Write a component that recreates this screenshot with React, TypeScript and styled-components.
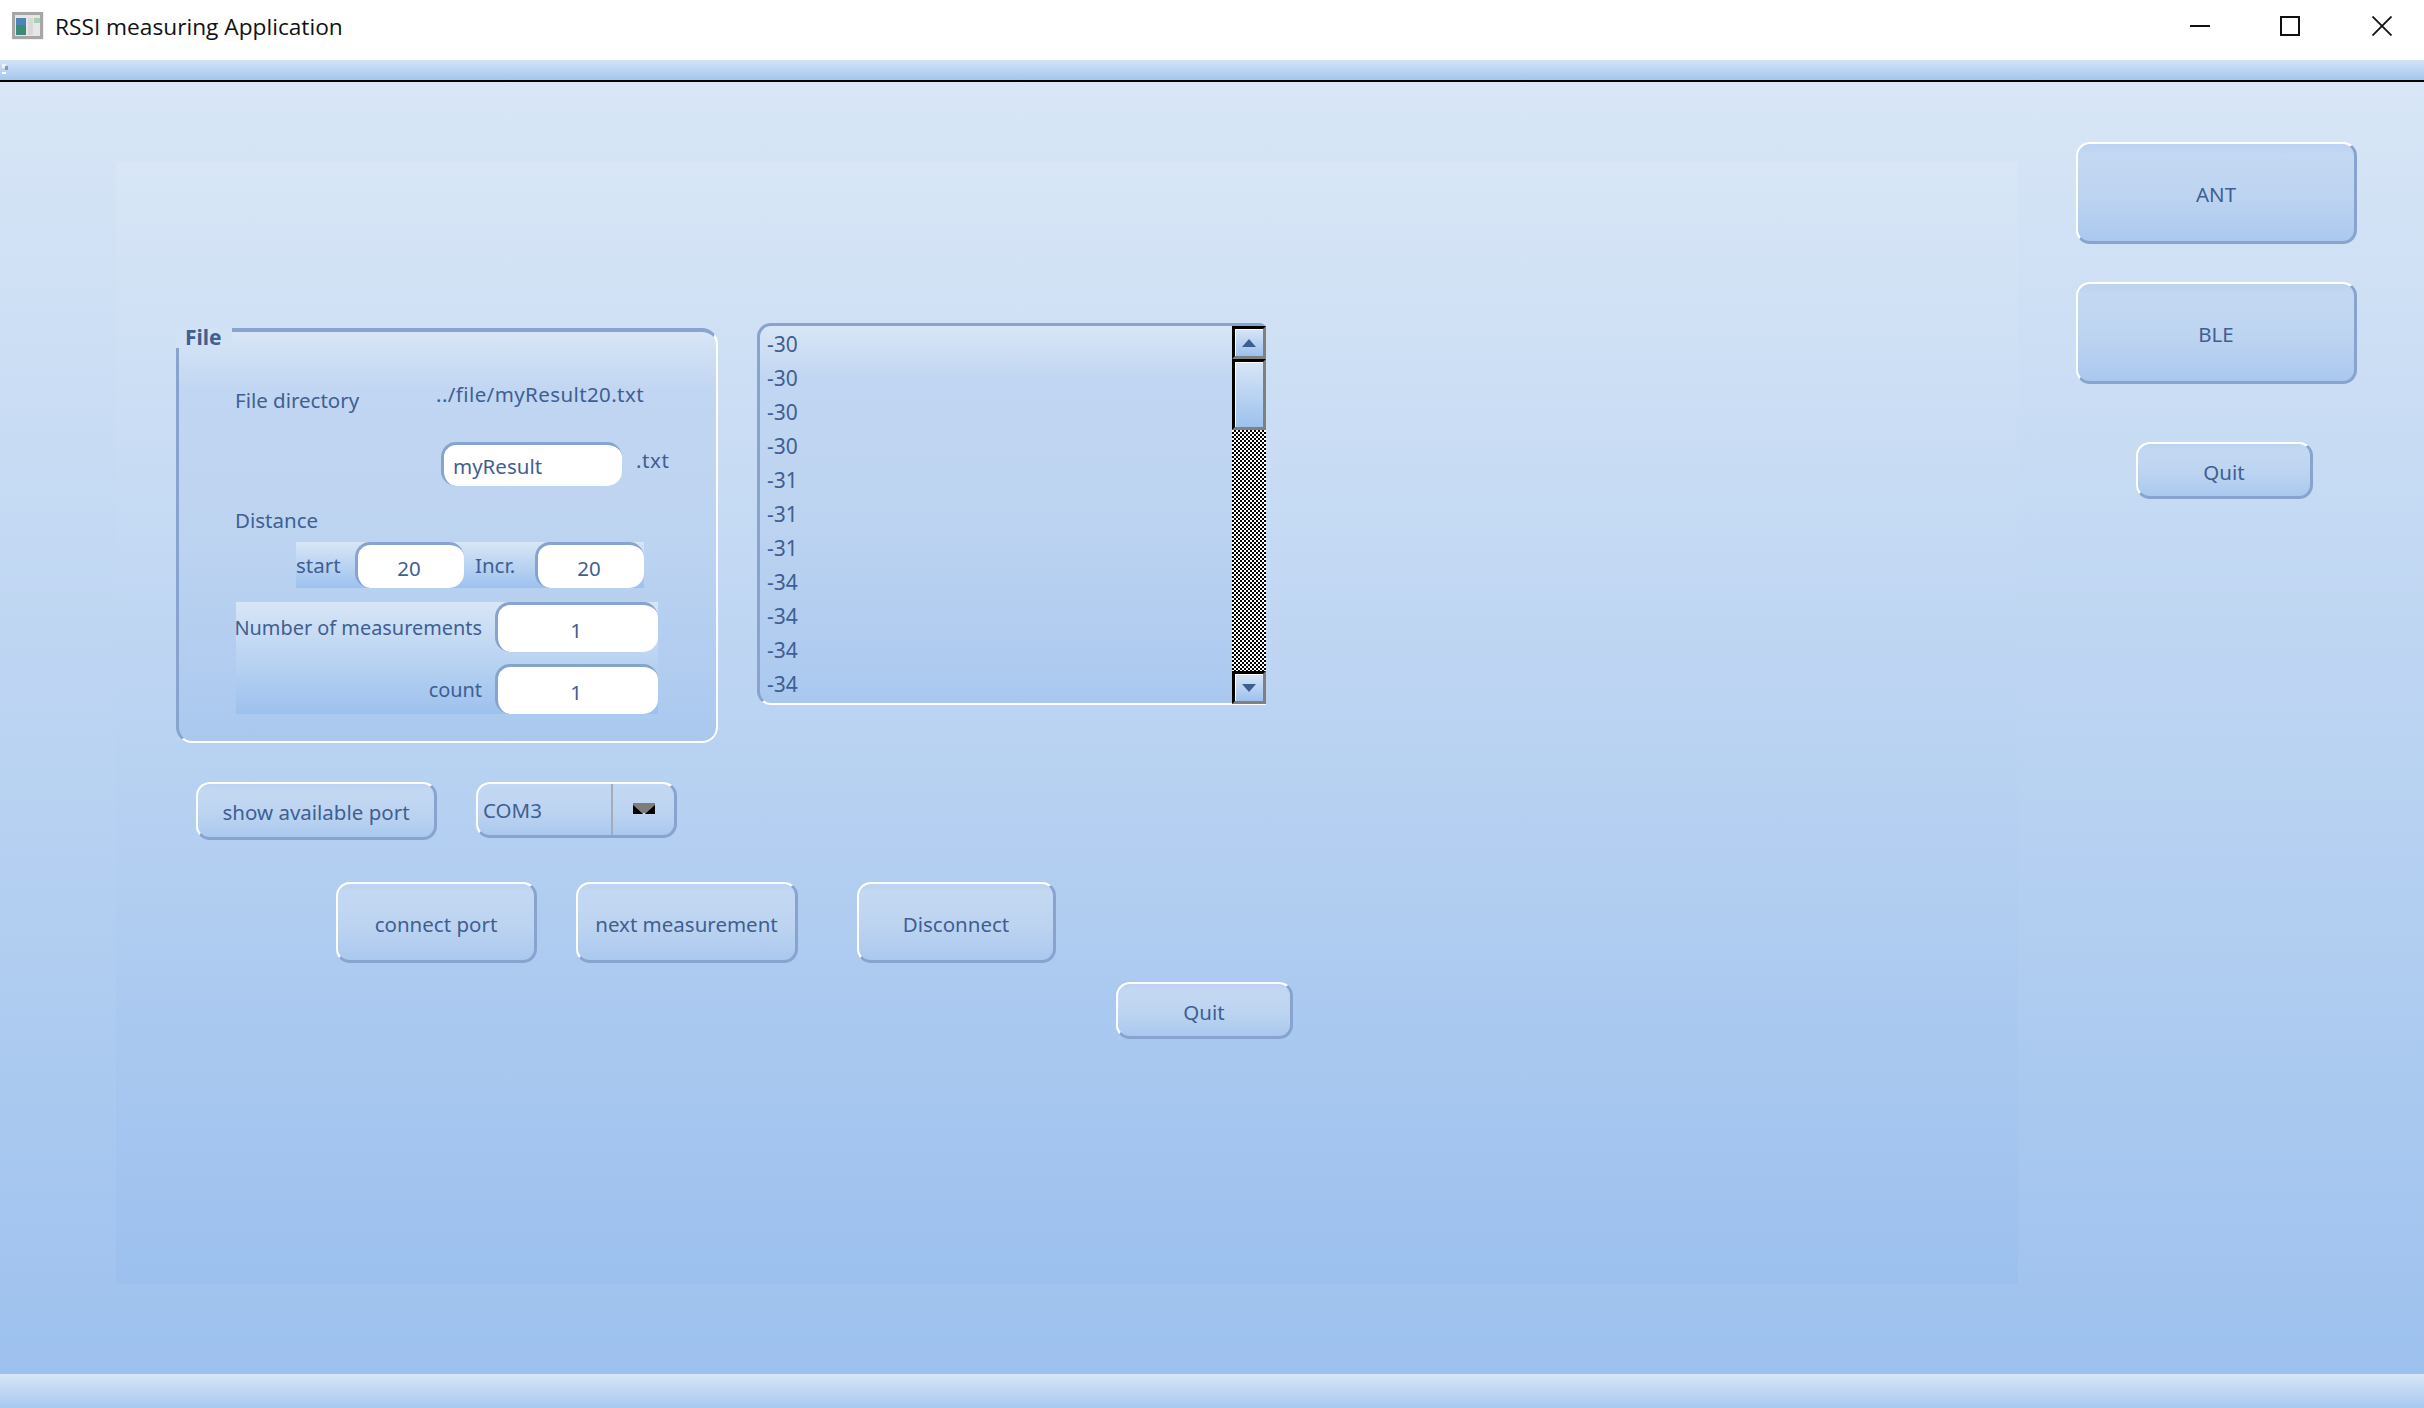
import React from "react";
import styled, { createGlobalStyle } from "styled-components";

const Global = createGlobalStyle`
  html, body { margin: 0; padding: 0; width: 2424px; height: 1408px; overflow: hidden; background: #fff; }
  #root { width: 2424px; height: 1408px; }
  * { box-sizing: border-box; }
`;

const face = `"Noto Sans", "Open Sans", sans-serif`;
const ink = "#3f5f92";
const dark = "#87a3ce";

const Window = styled.div`
  display: flex;
  flex-direction: column;
  width: 2424px;
  height: 1408px;
  font-family: ${face};
  font-size: 20.5px;
  color: ${ink};
`;
const TitleBar = styled.div`
  display: flex;
  align-items: center;
  height: 60px;
  padding: 0 0 8px 12px;
  background: #fff;
`;
const TitleText = styled.span`
  margin-left: 11px;
  font-family: "Open Sans", sans-serif;
  font-size: 22.7px;
  color: #111;
  flex: 1;
`;
const WinControls = styled.div`
  display: flex;
  align-items: center;
  gap: 70px;
  padding-right: 32px;
`;
const CloseSlot = styled.div`
  display: flex;
  margin-left: 2px;
`;
const MenuBar = styled.div`
  display: flex;
  align-items: center;
  height: 22px;
  padding: 0 0 2px 2px;
  background: linear-gradient(#d3e3f6, #a5c6ef);
  border-bottom: 2px solid #000;
`;
const Central = styled.div`
  flex: 1;
  display: flex;
  align-items: flex-start;
  padding: 60px 0 0 116px;
  background: linear-gradient(#d8e6f6, #9dc1ee);
`;
const Panel = styled.div`
  flex: none;
  width: 1902px;
  height: 1122px;
  margin-top: 20px;
  padding-top: 161px;
  display: flex;
  flex-direction: column;
  background: linear-gradient(#d8e6f6, #9cc0ee);
`;
const TopRow = styled.div`
  display: flex;
  align-items: flex-start;
  gap: 39px;
  padding-left: 60px;
`;
const Group = styled.div`
  position: relative;
  width: 542px;
  height: 415px;
  margin-top: 5px;
  padding-top: 50px;
  border-style: solid;
  border-width: 4px 2px 2px 3px;
  border-color: ${dark} #fff #fff ${dark};
  border-radius: 16px;
  background: linear-gradient(#d8e6f6 0, #c1d6f2 14%, #bdd4f1 50%, #aac8ef 100%);
`;
const GroupTitle = styled.div`
  position: absolute;
  left: -3px;
  top: -4px;
  width: 56px;
  height: 20px;
  padding-left: 9px;
  line-height: 18px;
  font-weight: 700;
  font-size: 21px;
  background: #d2e2f5;
`;
const Label = styled.div`
  height: 24px;
  line-height: 24px;
  white-space: nowrap;
`;
const DirRow = styled.div`
  display: flex;
  padding-left: 56px;
`;
const DirLabel = styled(Label)`
  width: 201px;
  margin-top: 6px;
`;
const DirValue = styled(Label)`
  letter-spacing: 0.4px;
`;
const NameRow = styled.div`
  display: flex;
  margin: 30px 0 0 262px;
`;
const Suffix = styled(Label)`
  margin: 6px 0 0 14px;
  letter-spacing: 0.6px;
`;
const DistanceLabel = styled(Label)`
  margin: 22px 0 0 56px;
`;
const Field = styled.div<{ $w: number; $h: number; $left?: boolean }>`
  width: ${(p) => p.$w}px;
  height: ${(p) => p.$h}px;
  flex: none;
  padding: ${(p) => (p.$left ? "1px 0 0 9px" : "2px 4px 0 0")};
  display: flex;
  align-items: center;
  justify-content: ${(p) => (p.$left ? "flex-start" : "center")};
  background: #fff;
  border-style: solid;
  border-width: 3px 0 0 3px;
  border-color: ${dark};
  border-radius: 15px;
  white-space: nowrap;
`;
const StartStrip = styled.div`
  display: flex;
  align-items: center;
  width: 348px;
  height: 46px;
  margin: 10px 0 0 117px;
  background: linear-gradient(#d8e6f6, #9dc1ee);
`;
const StartLabel = styled.span`
  width: 59px;
`;
const IncrLabel = styled.span`
  width: 71px;
  padding-left: 11px;
`;
const CountStrip = styled.div`
  display: grid;
  grid-template-columns: 246px 163px;
  grid-auto-rows: 50px;
  column-gap: 13px;
  row-gap: 12px;
  align-items: center;
  width: 422px;
  margin: 14px 0 0 57px;
  background: linear-gradient(#d8e6f6, #9dc1ee);
`;
const RightLabel = styled.span`
  justify-self: end;
  font-size: 19.9px;
  white-space: nowrap;
`;
const ListBox = styled.div`
  display: flex;
  width: 509px;
  height: 382px;
  border-style: solid;
  border-width: 3px 0 2px 3px;
  border-color: ${dark} transparent #fff ${dark};
  border-radius: 14px 6px 0 14px;
  background: linear-gradient(#d8e6f6 0, #c1d6f2 14%, #bdd4f1 50%, #aac8ef 100%);
`;
const Items = styled.div`
  flex: 1;
  padding: 1px 0 0 7px;
  font-size: 21px;
`;
const Item = styled.div`
  height: 34px;
  line-height: 34px;
`;
const Scrollbar = styled.div`
  width: 34px;
  height: 378px;
  display: flex;
  flex-direction: column;
  flex: none;
`;
const ScrollPart = styled.div<{ $h: number }>`
  height: ${(p) => p.$h}px;
  flex: none;
  display: flex;
  align-items: center;
  justify-content: center;
  border-style: solid;
  border-width: 3px;
  border-color: #000 #808080 #808080 #000;
  box-shadow: inset 1px 1px 0 #fff;
  background: linear-gradient(#d8e6f6, #9dc1ee);
`;
const Trough = styled.div`
  flex: 1;
  background: repeating-conic-gradient(#000 0 25%, #fff 0 50%) 0 0 / 4px 4px;
`;
const PortRow = styled.div`
  display: flex;
  gap: 39px;
  margin: 39px 0 0 80px;
`;
const Button = styled.div<{ $w: number; $h: number }>`
  width: ${(p) => p.$w}px;
  height: ${(p) => p.$h}px;
  padding-top: 3px;
  display: flex;
  align-items: center;
  justify-content: center;
  flex: none;
  border-style: solid;
  border-width: 2px 3px 3px 2px;
  border-color: #fff ${dark} ${dark} #fff;
  border-radius: 14px;
  background: linear-gradient(#bcd2f0 0, #c3d8f2 12%, #bdd4f1 55%, #aac8ef 100%);
  white-space: nowrap;
`;
const Combo = styled.div`
  display: flex;
  width: 201px;
  height: 56px;
  border-style: solid;
  border-width: 2px 3px 3px 2px;
  border-color: #fff ${dark} ${dark} #fff;
  border-radius: 14px;
  background: linear-gradient(#c3d8f2 0, #bdd4f1 55%, #aac8ef 100%);
`;
const ComboText = styled.div`
  width: 135px;
  padding-left: 5px;
  display: flex;
  align-items: center;
  border-right: 2px solid #a3acb8;
`;
const ComboArrow = styled.div`
  flex: 1;
  display: flex;
  align-items: center;
  justify-content: center;
  padding-bottom: 2px;
`;
const ActionRow = styled.div`
  display: flex;
  margin: 42px 0 0 220px;
`;
const QuitRow = styled.div`
  margin: 19px 0 0 1000px;
`;
const SideColumn = styled.div`
  flex: none;
  display: flex;
  flex-direction: column;
  align-items: flex-start;
  margin-left: 58px;
`;
const SideQuit = styled.div`
  margin: 58px 0 0 60px;
`;
const SideSecond = styled.div`
  margin-top: 38px;
`;
const StatusBar = styled.div`
  height: 34px;
  background: linear-gradient(#d8e6f6, #a7c8f0);
`;
const Gap = styled.div<{ $w: number }>`
  width: ${(p) => p.$w}px;
  flex: none;
`;

const AppIcon = () => (
  <svg width="32" height="28" viewBox="0 0 32 28">
    <rect x="0" y="0" width="32" height="28" fill="#f0f0f0" />
    <rect x="1.5" y="1.5" width="28" height="24" fill="#e6e6e6" stroke="#a6a6a6" strokeWidth="3" />
    <rect x="4" y="6" width="10" height="17" fill="#3d8a7a" />
    <rect x="4" y="6" width="10" height="7" fill="#4d86b5" />
    <rect x="22" y="6" width="6" height="5" fill="#a8d0b0" />
    <rect x="16" y="6" width="5" height="17" fill="#d8d8d8" />
  </svg>
);
const Grip = () => (
  <svg width="6" height="10" viewBox="0 0 6 10">
    <rect x="0" y="0" width="4" height="4" fill="#eef3fa" />
    <rect x="3" y="2" width="3" height="4" fill="#8f98a5" />
    <rect x="0" y="8" width="4" height="2" fill="#fff" />
  </svg>
);
const IconMin = () => (
  <svg width="20" height="2" viewBox="0 0 20 2"><rect width="20" height="2" fill="#111" /></svg>
);
const IconMax = () => (
  <svg width="20" height="20" viewBox="0 0 20 20"><rect x="1" y="1" width="18" height="18" fill="none" stroke="#111" strokeWidth="2" /></svg>
);
const IconClose = () => (
  <svg width="20" height="20" viewBox="0 0 20 20"><path d="M0.5 0.5 19.5 19.5M19.5 0.5 0.5 19.5" stroke="#111" strokeWidth="1.8" /></svg>
);
const ArrowUp = () => (
  <svg width="14" height="8" viewBox="0 0 14 8"><path d="M7 0 14 8H0Z" fill="#3d5f8f" /></svg>
);
const ArrowDown = () => (
  <svg width="14" height="8" viewBox="0 0 14 8"><path d="M0 0H14L7 8Z" fill="#3d5f8f" /></svg>
);
const ComboGlyph = () => (
  <svg width="22" height="11" viewBox="0 0 22 11">
    <rect y="2" width="22" height="9" fill="#000" />
    <path d="M0 0H22V2L12 11H10L0 2Z" fill="#7d7d7d" />
    <rect x="10" y="10" width="2" height="1" fill="#dfe9f7" />
  </svg>
);

const values = ["-30", "-30", "-30", "-30", "-31", "-31", "-31", "-34", "-34", "-34", "-34"];

export default function App() {
  return (
    <Window>
      <Global />
      <TitleBar>
        <AppIcon />
        <TitleText>RSSI measuring Application</TitleText>
        <WinControls>
          <IconMin />
          <IconMax />
          <CloseSlot><IconClose /></CloseSlot>
        </WinControls>
      </TitleBar>
      <MenuBar>
        <Grip />
      </MenuBar>
      <Central>
        <Panel>
          <TopRow>
            <Group>
              <GroupTitle>File</GroupTitle>
              <DirRow>
                <DirLabel>File directory</DirLabel>
                <DirValue>../file/myResult20.txt</DirValue>
              </DirRow>
              <NameRow>
                <Field $w={181} $h={44} $left>myResult</Field>
                <Suffix>.txt</Suffix>
              </NameRow>
              <DistanceLabel>Distance</DistanceLabel>
              <StartStrip>
                <StartLabel>start</StartLabel>
                <Field $w={109} $h={46}>20</Field>
                <IncrLabel>Incr.</IncrLabel>
                <Field $w={109} $h={46}>20</Field>
              </StartStrip>
              <CountStrip>
                <RightLabel>Number of measurements</RightLabel>
                <Field $w={163} $h={50}>1</Field>
                <RightLabel>count</RightLabel>
                <Field $w={163} $h={50}>1</Field>
              </CountStrip>
            </Group>
            <ListBox>
              <Items>
                {values.map((v, i) => (
                  <Item key={i}>{v}</Item>
                ))}
              </Items>
              <Scrollbar>
                <ScrollPart $h={33}><ArrowUp /></ScrollPart>
                <ScrollPart $h={71} />
                <Trough />
                <ScrollPart $h={33}><ArrowDown /></ScrollPart>
              </Scrollbar>
            </ListBox>
          </TopRow>
          <PortRow>
            <Button $w={241} $h={58}>show available port</Button>
            <Combo>
              <ComboText>COM3</ComboText>
              <ComboArrow><ComboGlyph /></ComboArrow>
            </Combo>
          </PortRow>
          <ActionRow>
            <Button $w={201} $h={81}>connect port</Button>
            <Gap $w={39} />
            <Button $w={222} $h={81}>next measurement</Button>
            <Gap $w={59} />
            <Button $w={199} $h={81}>Disconnect</Button>
          </ActionRow>
          <QuitRow>
            <Button $w={177} $h={57}>Quit</Button>
          </QuitRow>
        </Panel>
        <SideColumn>
          <Button $w={281} $h={102}>ANT</Button>
          <SideSecond>
            <Button $w={281} $h={102}>BLE</Button>
          </SideSecond>
          <SideQuit>
            <Button $w={177} $h={57}>Quit</Button>
          </SideQuit>
        </SideColumn>
      </Central>
      <StatusBar />
    </Window>
  );
}
